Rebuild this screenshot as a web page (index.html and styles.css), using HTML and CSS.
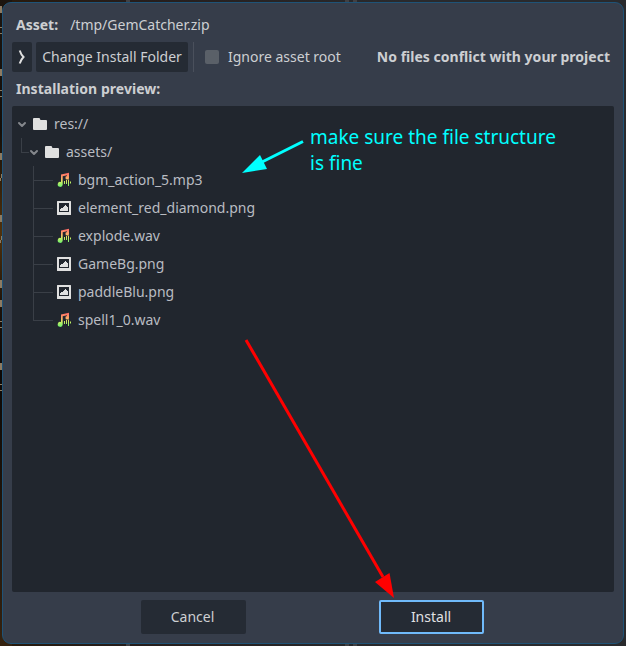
FILE: index.html
```html
<!DOCTYPE html>
<html lang="en">
<head>
<meta charset="utf-8">
<title>Configure Asset Before Installing</title>
<link rel="stylesheet" href="styles.css">
</head>
<body>
<svg class="backdrop" width="626" height="646" aria-hidden="true">
  <defs><linearGradient id="edge" x1="0" y1="0" x2="0" y2="1"><stop offset="0" stop-color="#1c150f"/><stop offset=".2" stop-color="#140e09"/><stop offset=".36" stop-color="#50310c"/><stop offset=".48" stop-color="#1b1109"/><stop offset=".58" stop-color="#0c0806"/><stop offset="1" stop-color="#35220f"/></linearGradient></defs>
  <path fill="url(#edge)" d="M0 0h12v646H0z"/>
  <path fill="#414144" d="M126 0h4v2h-4zM345 0h4v2h-4zM353 0h4v2h-4zM126 644h4v2h-4zM345 644h4v2h-4zM353 644h4v2h-4z"/>
  <path stroke="#8d7b62" stroke-width="2" d="M1 6v7M1 69v7M1 153v7M1 215v7M1 280v8M1 300v7M1 363v7"/>
  <path stroke="#8d7b62" d="M0 27.500h2M0 33.500h2M0 90.500h2M0 96.500h2M0 321.500h2M0 327.500h2M0 384.500h2M0 390.500h2M1.500 174v4M.5 178v3M1.500 236v4M.5 240v3"/>
</svg>
<svg class="symbols" aria-hidden="true">
  <defs>
    <linearGradient id="tone" x1="0" y1="0" x2="0" y2="16" gradientUnits="userSpaceOnUse">
      <stop offset=".1" stop-color="#ff6f66"/><stop offset=".42" stop-color="#ffb568"/><stop offset=".62" stop-color="#c9f064"/><stop offset="1" stop-color="#55ee70"/>
    </linearGradient>
    <symbol id="folder" viewBox="0 0 16 16"><path fill="#e0e0e0" d="M2 2a1 1 0 0 0-1 1v10a1 1 0 0 0 1 1h12a1 1 0 0 0 1-1V5a1 1 0 0 0-1-1H9a1 1 0 0 1-1-1 1 1 0 0 0-1-1z"/></symbol>
    <symbol id="image" viewBox="0 0 16 16"><path fill="#e0e0e0" fill-rule="evenodd" d="M1.500 1h13a.5.5 0 0 1 .5.5v13a.5.5 0 0 1-.5.5h-13a.5.5 0 0 1-.5-.5v-13a.5.5 0 0 1 .5-.5zM3 3v9h10V3zm6 2h1v1h1v1h1v4H4V9h1V8h2V7h1V6h1z"/></symbol>
    <symbol id="audio" viewBox="0 0 16 16"><path fill="url(#tone)" d="M5 2.500l8-1.700V5.500a1.800 1.800 0 1 1-2-1.500V3.300L6.700 4.200v8.300A2.500 2.500 0 1 1 5 10z"/><path stroke="url(#tone)" d="M8.500 9v3M10.500 8v4M12.500 7.500v6.500M14.500 9.500v2"/></symbol>
    <symbol id="chevron" viewBox="0 0 12 12"><path fill="none" stroke="#84878c" stroke-width="2" stroke-linecap="round" stroke-linejoin="round" d="M3 5l3 3 3-3"/></symbol>
  </defs>
</svg>
<main class="dialog">
  <div class="asset"><b>Asset:</b><span>/tmp/GemCatcher.zip</span></div>
  <div class="toolbar">
    <button class="expand" aria-label="Expand"><svg width="20" height="30"><path fill="none" stroke="#e0e0e0" stroke-width="2" d="M7.700 8.500Q9 12.500 11.500 15Q9 17.500 7.700 21.500" /></svg></button>
    <button class="change">Change Install Folder</button>
    <i class="separator"></i>
    <label class="ignore"><i class="box"></i>Ignore asset root</label>
    <b class="status">No files conflict with your project</b>
  </div>
  <div class="preview-label">Installation preview:</div>
  <section class="preview">
    <ul class="tree">
      <li class="row root"><svg class="arrow"><use href="#chevron"/></svg><svg class="icon"><use href="#folder"/></svg>res://</li>
      <li class="row sub"><svg class="arrow"><use href="#chevron"/></svg><svg class="icon"><use href="#folder"/></svg>assets/</li>
      <li class="row file"><svg class="icon"><use href="#audio"/></svg>bgm_action_5.mp3</li>
      <li class="row file"><svg class="icon"><use href="#image"/></svg>element_red_diamond.png</li>
      <li class="row file"><svg class="icon"><use href="#audio"/></svg>explode.wav</li>
      <li class="row file"><svg class="icon"><use href="#image"/></svg>GameBg.png</li>
      <li class="row file"><svg class="icon"><use href="#image"/></svg>paddleBlu.png</li>
      <li class="row file"><svg class="icon"><use href="#audio"/></svg>spell1_0.wav</li>
    </ul>
    <p class="note">make sure the file structure<br>is fine</p>
  </section>
  <footer class="actions"><button>Cancel</button><button class="primary">Install</button></footer>
</main>
<svg class="arrows" width="626" height="646" aria-hidden="true">
  <path d="M303 141.500L262 162" stroke="#0ff" stroke-width="3"/><path fill="#0ff" d="M242 173L260 155L267 169z"/>
  <path d="M246 340L383 577" stroke="#f00" stroke-width="3"/><path fill="#f00" d="M394 598L375 582L389.500 573z"/>
</svg>
</body>
</html>
```
FILE: styles.css
```css
* { box-sizing: border-box; }
body {
  margin: 0; width: 626px; height: 646px; padding: 2px; overflow: hidden; position: relative;
  background: linear-gradient(90deg, #281a0c, #251d1b 130px, #292a2d 400px, #292a2d);
  font: 14px/20px "Noto Sans", sans-serif; color: #cdcfd2;
}
.backdrop { position: absolute; left: 0; top: 0; }
.symbols { position: absolute; width: 0; height: 0; }
.dialog { position: relative; width: 622px; height: 642px; border: 1px solid #1f5377; border-radius: 9px; background: #363d4a; padding: 9px; display: flex; flex-direction: column; }
.asset { height: 30px; margin-top: -2px; padding-left: 4px; line-height: 30px; display: flex; gap: 12px; }
.toolbar { height: 30px; margin-top: 2px; display: flex; align-items: center; }
button { border: 0; border-radius: 2px; padding: 0; font: inherit; color: inherit; background: #252b34; }
.expand { width: 20px; height: 30px; }
.expand svg { display: block; }
.change { width: 152px; height: 30px; margin-left: 4px; }
.separator { width: 1px; height: 30px; margin-left: 5px; background: #4a505c; }
.ignore { display: flex; align-items: center; gap: 9px; margin-left: 11px; }
.box { width: 14px; height: 14px; border-radius: 2px; background: #5a6068; }
.status { margin-left: auto; padding-right: 4px; letter-spacing: .02px; }
.preview-label { font-weight: bold; height: 34px; line-height: 34px; padding-left: 4px; letter-spacing: .03px; }
.preview { height: 486px; border-radius: 2px; background: #21262e; display: flex; }
.tree { list-style: none; margin: 0; padding: 4px 0 0; width: 298px; flex: none; }
.row { height: 28px; display: flex; align-items: center; position: relative; color: #b9bcc2; }
.icon { width: 16px; height: 16px; margin-right: 6px; flex: none; }
.arrow { width: 12px; height: 12px; margin-right: 4px; }
.root { padding-left: 4px; }
.sub { padding-left: 16px; }
.file { padding-left: 44px; }
.sub::before, .file::before { content: ""; position: absolute; border: solid #3a3f47; border-width: 0 0 1px 1px; }
.sub::before { left: 9px; top: 0; width: 7px; height: 14px; }
.file::before { left: 21px; top: -14px; width: 19px; height: 28px; }
.sub + .file::before { top: 0; height: 14px; }
.note { margin: 18px 0 0; font-size: 19px; line-height: 26px; color: #0ff; white-space: nowrap; }
.actions { display: flex; padding: 8px 0 0 129px; gap: 133px; }
.actions button { width: 105px; height: 34px; padding-right: 2px; }
.actions .primary { border: 2px solid #70bafa; color: #e0e1e3; padding-right: 1px; }
.arrows { position: absolute; left: 0; top: 0; pointer-events: none; }
```
